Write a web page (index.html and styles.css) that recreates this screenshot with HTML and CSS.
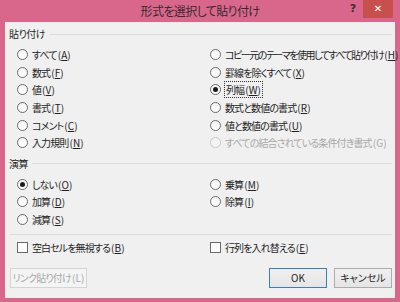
FILE: index.html
```html
<html>
  <head>
    <link rel="stylesheet" href="styles.css">
  </head>
  <body>
    <div class="window">
      <div class="titlebar">
        <div></div>
        <div class="title">形式を選択して貼り付け</div>
        <div class="controls">
          <div class="help">?</div>
          <div class="close">&#x2715;</div>
        </div>
      </div>

      <div class="content">
        <div class="group-head"><span>貼り付け</span><div class="rule"></div></div>
        <div class="options">
          <div class="col">
            <div class="opt"><span class="radio"></span>すべて<span class="key">(<u>A</u>)</span></div>
            <div class="opt"><span class="radio"></span>数式<span class="key">(<u>F</u>)</span></div>
            <div class="opt"><span class="radio"></span>値<span class="key">(<u>V</u>)</span></div>
            <div class="opt"><span class="radio"></span>書式<span class="key">(<u>T</u>)</span></div>
            <div class="opt"><span class="radio"></span>コメント<span class="key">(<u>C</u>)</span></div>
            <div class="opt"><span class="radio"></span>入力規則<span class="key">(<u>N</u>)</span></div>
          </div>
          <div class="col">
            <div class="opt long"><span class="radio"></span>コピー元のテーマを使用してすべて貼り付け<span class="key">(<u>H</u>)</span></div>
            <div class="opt"><span class="radio"></span>罫線を除くすべて<span class="key">(<u>X</u>)</span></div>
            <div class="opt"><span class="radio checked"></span><span class="focus">列幅<span class="key">(<u>W</u>)</span></span></div>
            <div class="opt"><span class="radio"></span>数式と数値の書式<span class="key">(<u>R</u>)</span></div>
            <div class="opt"><span class="radio"></span>値と数値の書式<span class="key">(<u>U</u>)</span></div>
            <div class="opt disabled"><span class="radio"></span>すべての結合されている条件付き書式<span class="key">(G)</span></div>
          </div>
        </div>

        <div class="group-head"><span>演算</span><div class="rule"></div></div>
        <div class="options">
          <div class="col">
            <div class="opt"><span class="radio checked"></span>しない<span class="key">(<u>O</u>)</span></div>
            <div class="opt"><span class="radio"></span>加算<span class="key">(<u>D</u>)</span></div>
            <div class="opt"><span class="radio"></span>減算<span class="key">(<u>S</u>)</span></div>
          </div>
          <div class="col">
            <div class="opt"><span class="radio"></span>乗算<span class="key">(<u>M</u>)</span></div>
            <div class="opt"><span class="radio"></span>除算<span class="key">(<u>I</u>)</span></div>
          </div>
        </div>

        <div class="separator"></div>

        <div class="options checks">
          <div class="opt"><span class="checkbox"></span>空白セルを無視する<span class="key">(<u>B</u>)</span></div>
          <div class="opt"><span class="checkbox"></span>行列を入れ替える<span class="key">(<u>E</u>)</span></div>
        </div>

        <div class="buttons">
          <div class="btn disabled wide">リンク貼り付け<span class="key">(L)</span></div>
          <div class="right">
            <div class="btn default">OK</div>
            <div class="btn">キャンセル</div>
          </div>
        </div>
      </div>
    </div>
  </body>
</html>
```

FILE: styles.css
```css
body {
  margin: 0;
  background-color: #d9678c;
  font-family: "Noto Sans CJK JP", "Noto Sans", sans-serif;
  font-feature-settings: "palt";
  font-size: 10px;
  color: #1e1e1e;
}
.window {
  width: 400px;
  height: 302px;
  display: flex;
  flex-direction: column;
}
.titlebar {
  height: 22px;
  display: grid;
  grid-template-columns: 1fr auto 1fr;
  align-items: start;
}
.title {
  font-size: 12px;
  letter-spacing: -0.6px;
  line-height: 22px;
  color: #3a2a30;
}
.controls {
  display: flex;
  justify-content: flex-end;
  padding-right: 7px;
}
.help {
  width: 14px;
  margin-right: 3px;
  font-family: "DejaVu Sans", sans-serif;
  font-weight: bold;
  font-size: 11px;
  line-height: 18px;
  text-align: center;
  color: #3a2a30;
}
.close {
  width: 30px;
  height: 18px;
  background-color: #c7504f;
  color: white;
  font-family: "DejaVu Sans", sans-serif;
  font-weight: bold;
  font-size: 10px;
  line-height: 18px;
  text-align: center;
}
.content {
  flex: 1;
  margin: 0 5px 4px 5px;
  background-color: #f0f0f0;
  padding: 5px 3px 0 4px;
  display: flex;
  flex-direction: column;
}
.group-head {
  display: flex;
  align-items: center;
  height: 14px;
  line-height: 14px;
  letter-spacing: -0.5px;
}
.group-head .rule {
  flex: 1;
  margin-left: 4px;
  border-top: 1px solid #dcdcdc;
}
.options {
  display: grid;
  grid-template-columns: 193px 1fr;
  padding-left: 8px;
  padding-top: 5px;
}
.opt {
  height: 17.6px;
  display: flex;
  align-items: center;
  white-space: nowrap;
  letter-spacing: -0.9px;
}
.opt.long {
  letter-spacing: -1.5px;
}
.key {
  letter-spacing: 0.1px;
  margin-left: 1px;
}
.opt u {
  text-decoration-thickness: 1px;
  text-underline-offset: 1px;
}
.radio {
  width: 9px;
  height: 9px;
  border: 1px solid #6a6a6a;
  border-radius: 50%;
  background: linear-gradient(#f4f4f4, #ffffff);
  margin-right: 4px;
  flex: none;
  display: flex;
  align-items: center;
  justify-content: center;
}
.radio.checked::after {
  content: "";
  width: 5px;
  height: 5px;
  border-radius: 50%;
  background-color: #1a1a1a;
}
.disabled {
  color: #a8a8a8;
}
.opt.disabled .radio {
  border-color: #c8c8c8;
  background: #f4f4f4;
}
.focus {
  outline: 1px dotted #333;
  outline-offset: 0;
  padding: 0 1px;
}
.options + .group-head {
  margin-top: 5px;
}
.separator {
  border-top: 1px solid #dcdcdc;
  margin: 6px 0 0 0;
}
.checks {
  padding-top: 3px;
  grid-template-columns: 193px 1fr;
}
.checkbox {
  width: 9px;
  height: 9px;
  border: 1px solid #6a6a6a;
  background: #ffffff;
  margin-right: 4px;
  flex: none;
}
.buttons {
  display: flex;
  justify-content: space-between;
  align-items: center;
  margin-top: 12px;
  padding-left: 1px;
}
.right {
  display: flex;
  gap: 7px;
}
.btn {
  width: 56px;
  height: 18px;
  line-height: 18px;
  text-align: center;
  border: 1px solid #acacac;
  background: linear-gradient(#f0f0f0, #e5e5e5);
  white-space: nowrap;
}
.btn.wide {
  width: 75px;
  letter-spacing: -0.8px;
}
.btn.disabled {
  border-color: #d5d5d5;
  background: #f4f4f4;
}
.btn.default {
  border-color: #3c7fb1;
}
```
